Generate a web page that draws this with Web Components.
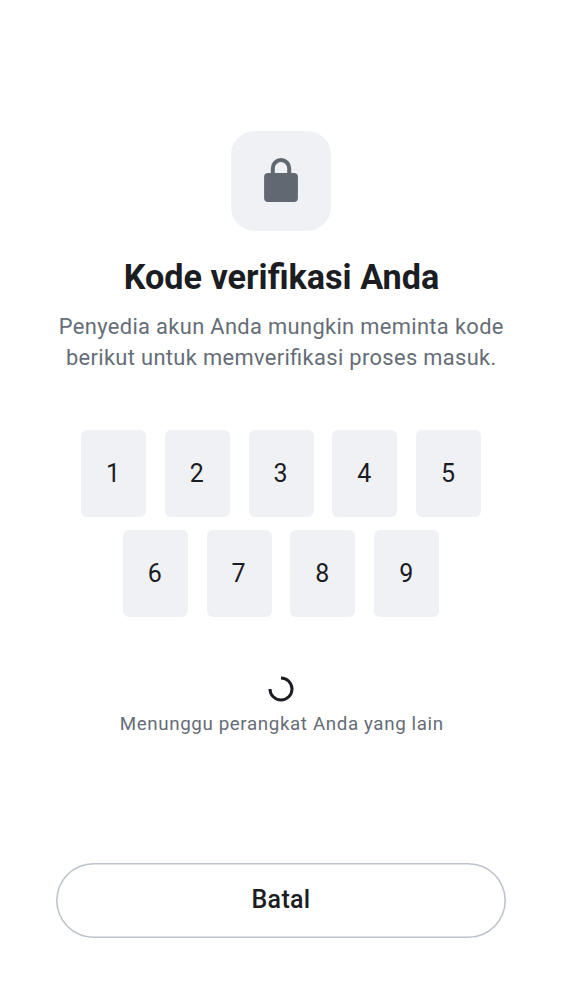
<!DOCTYPE html>
<html lang="id">
<head>
<meta charset="utf-8">
<title>Kode verifikasi Anda</title>
<style>
body{margin:0;background:#fff;font-family:Roboto,sans-serif;color:#1b1d22}
</style>
</head>
<body>
<verification-screen></verification-screen>
<script>
function define(name, html) {
  const template = document.createElement('template');
  template.innerHTML = html;
  customElements.define(name, class extends HTMLElement {
    constructor() {
      super();
      this.attachShadow({mode: 'open'}).append(template.content.cloneNode(true));
    }
  });
}

define('lock-badge', `<style>
:host{display:block;width:100px;height:100px;border-radius:24px;background:#f0f1f5}
svg{display:block}
</style>
<svg width="100" height="100" viewBox="0 0 100 100">
<rect x="33.1" y="42" width="33.8" height="29" rx="4" fill="#616872"/>
<path d="M41.8 43V37.3a8.2 8.2 0 0 1 16.4 0V43" fill="none" stroke="#616872" stroke-width="4"/>
</svg>`);

define('screen-header', `<style>
:host{display:flex;flex-direction:column;align-items:center;text-align:center}
h1{margin:26px 0 0;padding-left:1px;font-size:34.2px;line-height:40px;font-weight:700;white-space:nowrap;font-feature-settings:"liga" 1}
p{margin:14px 0 0;padding-left:.6px;font-size:21.87px;line-height:31.2px;letter-spacing:.35px;color:#656d77;white-space:nowrap;font-feature-settings:"liga" 1}
</style>
<lock-badge></lock-badge>
<h1><slot name="title"></slot></h1>
<p><slot></slot></p>`);

define('code-digit', `<style>
:host{display:flex;align-items:center;justify-content:center;box-sizing:border-box;width:65px;height:87px;padding-right:1px;border-radius:6px;background:#f0f1f5;font-size:25px;line-height:37px}
</style><slot></slot>`);

define('code-grid', `<style>
:host{display:flex;flex-wrap:wrap;justify-content:center;gap:13px 18.8px;width:402px}
</style><slot></slot>`);

define('waiting-status', `<style>
:host{display:flex;flex-direction:column;align-items:center;font-size:18.75px;line-height:25px;letter-spacing:.62px;color:#656d77;white-space:nowrap}
svg{display:block;margin-bottom:10px}
span{padding-left:1.4px}
</style>
<svg width="26" height="26" viewBox="0 0 26 26"><path d="M13 2a11 11 0 1 1-11 11" fill="none" stroke="#1b1d22" stroke-width="3"/></svg>
<span><slot></slot></span>`);

define('outline-button', `<style>
:host{display:block;width:450px}
button{display:flex;align-items:center;justify-content:center;box-sizing:border-box;width:100%;height:75px;margin:0;padding:0 0 1px;border:0;border-radius:37.5px;box-shadow:inset 0 0 0 1.56px #bdc3cc;background:#fff;font:500 25px/37px Roboto,sans-serif;letter-spacing:.3px;color:#1b1d22}
</style><button><slot></slot></button>`);

define('verification-screen', `<style>
:host{display:flex;flex-direction:column;align-items:center;box-sizing:border-box;height:1000px;padding:131px 0 62.5px}
code-grid{margin-top:56.6px}
waiting-status{margin-top:59px}
outline-button{margin-top:auto}
</style>
<screen-header><span slot="title">Kode verifikasi Anda</span>Penyedia akun Anda mungkin meminta kode<br>berikut untuk memverifikasi proses masuk.</screen-header>
<code-grid>
<code-digit>1</code-digit><code-digit>2</code-digit><code-digit>3</code-digit><code-digit>4</code-digit><code-digit>5</code-digit><code-digit>6</code-digit><code-digit>7</code-digit><code-digit>8</code-digit><code-digit>9</code-digit>
</code-grid>
<waiting-status>Menunggu perangkat Anda yang lain</waiting-status>
<outline-button>Batal</outline-button>`);
</script>
</body>
</html>
